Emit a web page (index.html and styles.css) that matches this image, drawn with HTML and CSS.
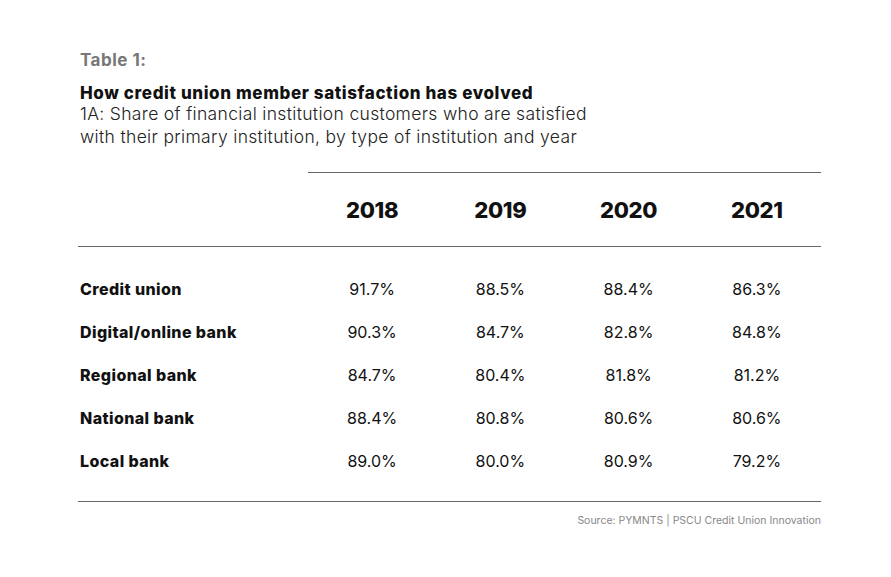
FILE: index.html
```html
<!DOCTYPE html>
<html>
<head>
<meta charset="utf-8">
<link rel="stylesheet" href="styles.css">
</head>
<body>
<div class="page">
  <div class="label">Table 1:</div>
  <div class="title">How credit union member satisfaction has evolved</div>
  <div class="subtitle">1A: Share of financial institution customers who are satisfied<br>with their primary institution, by type of institution and year</div>
  <div class="table">
    <div class="head">
      <div class="spacer"></div>
      <div class="years">
        <div class="year">2018</div>
        <div class="year">2019</div>
        <div class="year">2020</div>
        <div class="year">2021</div>
      </div>
    </div>
    <div class="body">
      <div class="row"><div class="name">Credit union</div><div class="val">91.7%</div><div class="val">88.5%</div><div class="val">88.4%</div><div class="val">86.3%</div></div>
      <div class="row"><div class="name">Digital/online bank</div><div class="val">90.3%</div><div class="val">84.7%</div><div class="val">82.8%</div><div class="val">84.8%</div></div>
      <div class="row"><div class="name">Regional bank</div><div class="val">84.7%</div><div class="val">80.4%</div><div class="val">81.8%</div><div class="val">81.2%</div></div>
      <div class="row"><div class="name">National bank</div><div class="val">88.4%</div><div class="val">80.8%</div><div class="val">80.6%</div><div class="val">80.6%</div></div>
      <div class="row"><div class="name">Local bank</div><div class="val">89.0%</div><div class="val">80.0%</div><div class="val">80.9%</div><div class="val">79.2%</div></div>
    </div>
  </div>
  <div class="source">Source: PYMNTS | PSCU Credit Union Innovation</div>
</div>
</body>
</html>
```
FILE: styles.css
```css
html, body { margin: 0; padding: 0; background: #fff; }
body { font-family: "Inter", "Liberation Sans", sans-serif; color: #111; }
.page { width: 741px; padding: 48px 0 0 80px; }
.label { font-size: 17px; font-weight: 700; color: #777; line-height: 24px; letter-spacing: 0.5px; }
.title { margin-top: 10px; font-size: 17px; font-weight: 800; line-height: 22px; color: #111; letter-spacing: 0.6px; }
.subtitle { margin-top: -2px; font-size: 17.5px; font-weight: 300; line-height: 23px; color: #222; letter-spacing: 0.33px; }
.table { margin-top: 24px; }
.head { display: flex; }
.spacer { width: 228px; }
.years { flex: 1; display: grid; grid-template-columns: repeat(4, 1fr); border-top: 1px solid #666; height: 73px; align-items: center; }
.year { text-align: center; font-size: 22px; font-weight: 800; letter-spacing: -0.3px; }
.body { border-top: 1px solid #666; border-bottom: 1px solid #666; padding: 20px 0 19px 2px; margin-left: -2px; }
.row { display: grid; grid-template-columns: 228px repeat(4, 1fr); height: 43px; align-items: center; }
.name { font-size: 16px; font-weight: 800; letter-spacing: 0.4px; }
.val { text-align: center; font-size: 16px; font-weight: 400; }
.source { text-align: right; font-size: 10.5px; color: #888; margin-top: 12px; }
```
